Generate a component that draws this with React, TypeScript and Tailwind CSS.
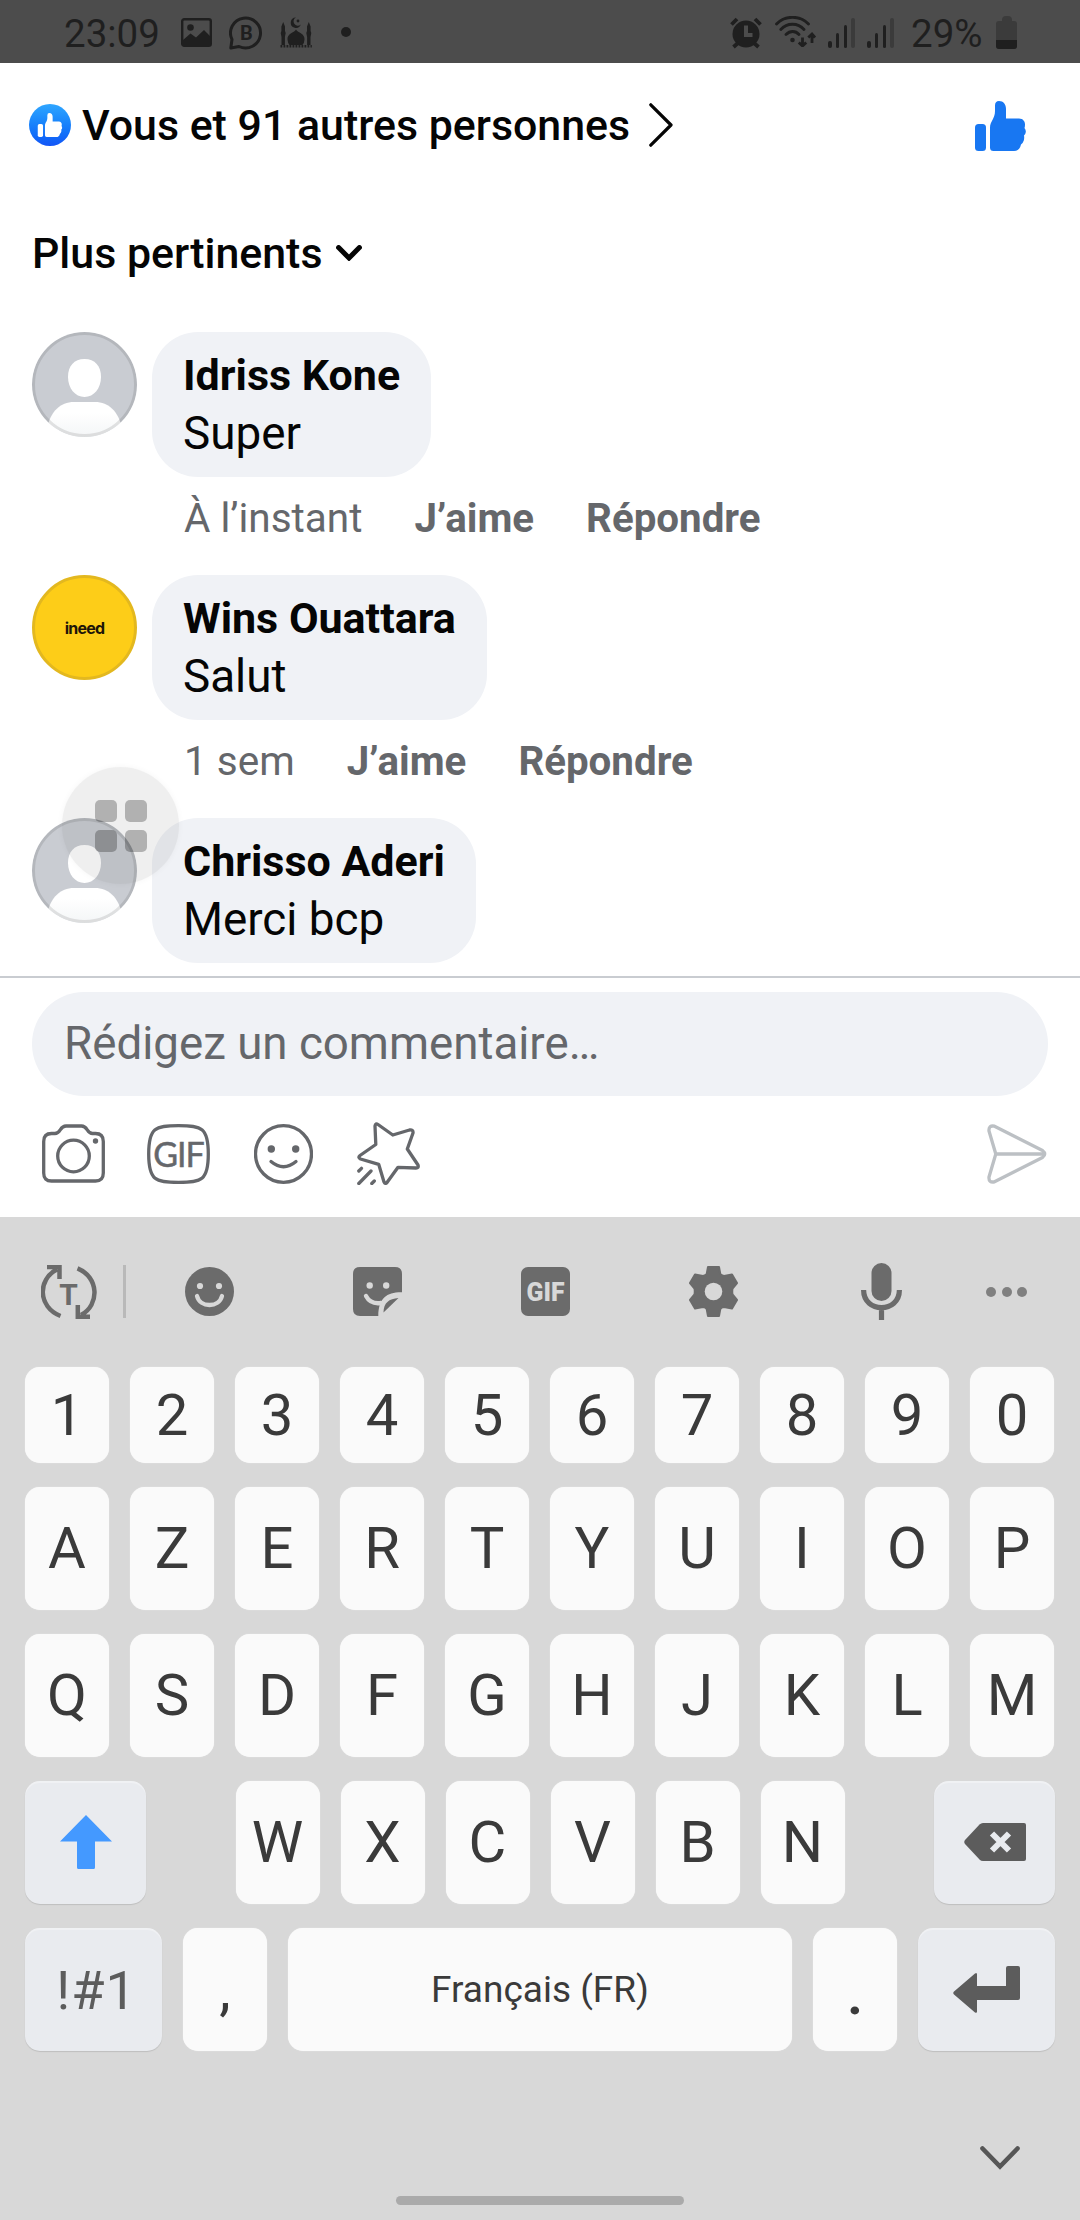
import type { ReactNode } from 'react';

function Thumb({ className }: { className: string }) {
  return (
    <svg viewBox="0 0 51 50" className={className} fill="currentColor">
      <rect x="0" y="23" width="11" height="27" rx="3.5" />
      <path d="M18.500 50 Q15 50 15 46.500 V27 C15 20 20 18 20 10 V4.500 Q20 0 24 0 C28.500 0 31 3.500 31 8 V17.500 H44 C48 17.500 50 20.500 50 23.500 Q50 25.500 49.500 27 Q51 29 50.800 31 Q50.500 33.500 49 34.500 Q49.500 37 48.800 39.500 Q48 42 46 43.500 C45 48 42.500 50 39 50 Z" />
    </svg>
  );
}

function StatusBar() {
  return (
    <div className="flex h-[63px] shrink-0 items-center bg-[#4c4c4c] pl-[64px] pr-[63px] text-[38.5px] leading-[64px] text-[#1f1f1f]">
      <span className="w-[96px] pt-[5px]">23:09</span>
      <svg viewBox="0 0 31 29" className="ml-[21px] mt-[2px] h-[29px] w-[31px]">
        <rect x="1.200" y="1.200" width="28.600" height="26.600" rx="2" fill="none" stroke="currentColor" strokeWidth="2.400" />
        <circle cx="9.500" cy="9.500" r="3.300" fill="currentColor" />
        <path d="M2 22 L9.500 15.500 L15 19.500 L23 12 L29.500 18.500 V28 H2 Z" fill="currentColor" />
      </svg>
      <svg viewBox="0 0 34 34" className="ml-[17px] mt-[3px] h-[34px] w-[34px]">
        <path d="M1.800 32 L3 23.500 A15 15 0 1 1 10 30.500 Z" fill="none" stroke="currentColor" strokeWidth="3" strokeLinejoin="round" />
        <text x="17.300" y="24" textAnchor="middle" fontSize="20" fontWeight="700" fill="currentColor">B</text>
      </svg>
      <svg viewBox="0 0 32 31" className="ml-[17px] mt-[2px] h-[31px] w-[32px]" fill="currentColor">
        <path d="M16 0.500 A5.200 5.200 0 1 0 20.800 7.500 A4.300 4.300 0 1 1 16 0.500 Z" />
        <circle cx="18" cy="4" r="1.400" />
        <path d="M16 12.500 C18 16 25 16.500 24.500 22.500 Q24.300 26 22.500 28 H9.500 Q7.700 26 7.500 22.500 C7 16.500 14 16 16 12.500 Z" />
        <path d="M3.200 5 L5 9.500 V14 L5.700 16 L4.900 20 V28 H1.500 V20 L0.700 16 L1.400 14 V9.500 Z" />
        <path d="M28.800 5 L30.600 9.500 V14 L31.300 16 L30.500 20 V28 H27.100 V20 L26.300 16 L27 14 V9.500 Z" />
        <path d="M0.500 29.300 H31.800" stroke="currentColor" strokeWidth="2.600" strokeDasharray="1.800 1.200" />
      </svg>
      <span className="ml-[29px] h-[10px] w-[10px] rounded-full bg-[#1f1f1f]" />

      <svg viewBox="0 0 33 32" className="ml-auto mt-[2px] h-[32px] w-[33px]">
        <circle cx="16" cy="17" r="13.500" fill="currentColor" />
        <path d="M1.500 7.500 L7 2 M30.500 7.500 L25 2 M3.500 30 L8 26 M28.500 30 L24 26" stroke="currentColor" strokeWidth="3.800" />
        <path d="M16 8.500 V18 H22.500" fill="none" stroke="#4c4c4c" strokeWidth="4" />
      </svg>
      <svg viewBox="0 0 41 31" className="ml-[12px] h-[31px] w-[41px]" fill="none" stroke="currentColor" strokeWidth="2.800" strokeLinecap="round">
        <path d="M1.500 8 C10 -1 25 -1 33.500 8 M5.800 13.500 C12 6.500 23 6.500 29 13.500 M11 18.500 C15 14.500 20.500 14.500 24 18.500" />
        <circle cx="17.500" cy="24" r="2.300" fill="currentColor" stroke="none" />
        <path d="M27.500 21.500 V29.500 M23.800 26.500 L27.500 30 L31.200 26.500 M37 18.500 V27 M33.300 21.500 L37 18 L40 21.500" strokeLinecap="butt" />
      </svg>
      <Signal className="ml-[12px] mt-[2px]" />
      <Signal className="ml-[12px] mt-[2px]" />
      <span className="ml-[17px] w-[72px] pt-[5px]">29%</span>
      <span className="ml-[13px] mt-[2px] flex h-[33px] w-[21px] flex-col items-center">
        <span className="h-[5px] w-[10px] rounded-t-sm bg-[#3b3b3b]" />
        <span className="flex w-full flex-1 flex-col justify-end overflow-hidden rounded-[3px] bg-[#3b3b3b]">
          <span className="h-[9px] bg-[#1f1f1f]" />
        </span>
      </span>
    </div>
  );
}

function Signal({ className }: { className: string }) {
  return (
    <span className={`flex h-[30px] w-[27px] items-end justify-between ${className}`}>
      <span className="h-[7px] w-[3.500px] rounded-full bg-[#1f1f1f]" />
      <span className="h-[15px] w-[3.500px] rounded-full bg-[#1f1f1f]" />
      <span className="h-[23px] w-[3.500px] rounded-full bg-[#1f1f1f]" />
      <span className="h-[30px] w-[3.500px] rounded-full bg-[#3b3b3b]" />
    </span>
  );
}

function DefaultAvatar() {
  return (
    <div className="relative h-[105px] w-[105px] shrink-0 overflow-hidden rounded-full bg-[#c9ccd2]">
      <svg viewBox="0 0 105 105" className="h-full w-full">
        <defs>
          <linearGradient id="torso" x1="0" y1="0" x2="0" y2="1">
            <stop offset="0.300" stopColor="#ffffff" />
            <stop offset="1" stopColor="#f4f6f7" />
          </linearGradient>
        </defs>
        <path d="M52.500 27 C63 27 69 34 69 45 C69 56 62 65 52.500 65 C43 65 36 56 36 45 C36 34 42 27 52.500 27 Z" fill="#fff" />
        <path d="M16 93 C19 80 28 70 42 70 H63 C77 70 86 80 89 93 V105 H16 Z" fill="url(#torso)" />
      </svg>
      <div className="absolute inset-0 rounded-full border-[3px] border-black/10" />
    </div>
  );
}

function IneedAvatar() {
  return (
    <div className="flex h-[105px] w-[105px] shrink-0 items-center justify-center rounded-full border-[3px] border-[#e3b81f] bg-[#fdcd18] font-[Inter,sans-serif] text-[16px] font-bold leading-none tracking-[-0.8px] text-[#1d1508]">
      ineed
    </div>
  );
}

const comments = [
  { name: 'Idriss Kone', text: 'Super', time: 'À l’instant', avatar: <DefaultAvatar /> },
  { name: 'Wins Ouattara', text: 'Salut', time: '1 sem', avatar: <IneedAvatar /> },
  { name: 'Chrisso Aderi', text: 'Merci bcp', time: '', avatar: <DefaultAvatar /> },
];

function Comments() {
  return (
    <div className="relative flex h-[657px] shrink-0 flex-col gap-[33px] overflow-hidden px-8 pt-[13px]">
      {comments.map((c) => (
        <div key={c.name} className="flex items-start gap-[15px]">
          {c.avatar}
          <div>
            <div className="h-[145px] w-fit rounded-[46px] bg-[#f0f2f6] px-[31px] pt-[18px] text-[#050505]">
              <p className="whitespace-nowrap text-[43px] font-bold leading-[50px]">{c.name}</p>
              <p className="mt-[5px] whitespace-nowrap text-[45.8px] leading-[58px]">{c.text}</p>
            </div>
            {c.time && (
              <div className="mt-[17px] flex h-[48px] items-baseline gap-[52px] pl-[32px] text-[40.5px] leading-[48px] text-[#65676b]">
                <span>{c.time}</span>
                <span className="text-[40.3px] font-bold">J’aime</span>
                <span className="text-[40.3px] font-bold">Répondre</span>
              </div>
            )}
          </div>
        </div>
      ))}

      {/* floating assistant button */}
      <div className="absolute left-[62px] top-[448px] grid h-[117px] w-[117px] grid-cols-2 place-content-center justify-center gap-2 rounded-full bg-[#646464]/10 px-[33px] shadow-[0_0_6px_rgba(0,0,0,0.04)]">
        <span className="h-[22px] w-[22px] rounded-[5px] bg-black/26" />
        <span className="h-[22px] w-[22px] rounded-[5px] bg-black/26" />
        <span className="h-[22px] w-[22px] rounded-[5px] bg-black/26" />
        <span className="h-[22px] w-[22px] rounded-[5px] bg-black/26" />
      </div>
    </div>
  );
}

function Composer() {
  return (
    <div className="flex h-[241px] shrink-0 flex-col border-t-2 border-[#c9ccd1] px-8 pt-[14px]">
      <div className="flex h-[104px] shrink-0 items-center rounded-full bg-[#f0f2f6] pl-[32px] text-[45.700px] text-[#65676b]">
        Rédigez un commentaire…
      </div>
      <div className="mt-[26px] flex h-[63px] items-center pl-[10px] text-[#65676b]">
        <svg viewBox="0 0 63 60" className="h-[60px] w-[63px]" fill="none" stroke="currentColor" strokeWidth="3.300">
          <path d="M9.500 9.500 H13 C19 9.500 17.500 2 24 2 H39.500 C46 2 44.500 9.500 50.500 9.500 H53.500 Q61.300 9.500 61.300 17.500 V49 Q61.300 57 53.500 57 H9.500 Q1.700 57 1.700 49 V17.500 Q1.700 9.500 9.500 9.500 Z" />
          <circle cx="31.500" cy="32" r="15.800" />
          <circle cx="53.500" cy="17" r="2.700" fill="currentColor" stroke="none" />
        </svg>
        <svg viewBox="0 0 63 60" className="ml-[42px] h-[60px] w-[63px] overflow-visible">
          <path d="M31.500 1.700 C55 1.700 61.300 4 61.300 30 C61.300 56 55 58.300 31.500 58.300 C8 58.300 1.700 56 1.700 30 C1.700 4 8 1.700 31.500 1.700 Z" fill="none" stroke="currentColor" strokeWidth="3.300" />
          <text x="31.500" y="43" textAnchor="middle" className="font-[Lato,sans-serif]" fontSize="34" letterSpacing="-1" fill="currentColor" stroke="currentColor" strokeWidth="0.500">GIF</text>
        </svg>
        <svg viewBox="0 0 59 60" className="ml-[44px] h-[60px] w-[59px]" fill="none" stroke="currentColor" strokeWidth="3.300" strokeLinecap="round">
          <ellipse cx="29.500" cy="30" rx="28" ry="28.300" />
          <circle cx="17.300" cy="25" r="3.700" fill="currentColor" stroke="none" />
          <circle cx="41.700" cy="25" r="3.700" fill="currentColor" stroke="none" />
          <path d="M17 37.500 Q29.500 48 42 37.500" />
        </svg>
        <svg viewBox="0 0 63 63" className="ml-[44px] h-[63px] w-[63px]" fill="none" stroke="currentColor" strokeWidth="3.300" strokeLinecap="round" strokeLinejoin="round">
          <path d="M21 2.500 L35.800 13 L52.500 8 Q56.500 7.500 56 11 L50.300 27 L61 43 Q62 46 59 46 L41 45.300 L30 60.500 Q28 62.500 27 60 L21.700 42.300 L3.500 37 Q0.500 35.500 3 33.500 L18.800 22.500 L18 4 Q18.500 0.800 21 2.500 Z" />
          <path d="M1.800 49 L4.500 46.300 M1.800 61.500 L14 49 M14.800 61.500 L17.300 59" />
        </svg>
        <svg viewBox="0 0 60 60" className="ml-auto mr-[1px] h-[60px] w-[60px]" fill="none" stroke="#bcc0c4" strokeWidth="3.300" strokeLinejoin="round">
          <path d="M8.800 30 L2 7 Q1.500 1 7.500 2.200 L55.500 26.500 Q60 30 55.500 33.500 L7.500 57.800 Q1.500 59 2 53 Z M8.800 30 H57" />
        </svg>
      </div>
    </div>
  );
}

function KeyboardToolbar() {
  return (
    <div className="flex h-[150px] items-center pb-[1px] pl-[41px] text-[#6b6b6b]">
      <svg viewBox="0 0 56 54" className="h-[54px] w-[56px]" fill="none" stroke="currentColor" strokeWidth="4.500">
        <path d="M19.500 51 C-3.500 42 -3.500 14 16 4.500 M6 2 H18.500 V14 M36.500 3.300 C58 12 59 40 40 50 M36.800 40 V51.800 H49" />
        <text x="27.500" y="39.500" textAnchor="middle" fontSize="30" fontWeight="700" fill="currentColor" stroke="none">T</text>
      </svg>
      <span className="ml-[26px] h-[53px] w-[3px] bg-[#b9b9b9]" />
      <svg viewBox="0 0 49 49" className="ml-[59px] h-[49px] w-[49px]">
        <circle cx="24.500" cy="24.500" r="24.500" fill="currentColor" />
        <circle cx="15" cy="19" r="3.100" fill="#d8d8d8" />
        <circle cx="34" cy="19" r="3.100" fill="#d8d8d8" />
        <path d="M12 29 C15 41 34 41 37 29" fill="none" stroke="#d8d8d8" strokeWidth="4.300" strokeLinecap="round" />
      </svg>
      <svg viewBox="0 0 49 49" className="ml-[119px] h-[49px] w-[49px]">
        <path d="M7 0 H42 Q49 0 49 7 V25.300 C34 25 25.500 31 25.300 49 H7 Q0 49 0 42 V7 Q0 0 7 0 Z" fill="currentColor" />
        <path d="M45.500 31 C36 31.500 30.500 36 30.500 45.500 Z" fill="currentColor" />
        <circle cx="16.700" cy="18.500" r="3.200" fill="#d8d8d8" />
        <circle cx="33.200" cy="18.500" r="3.200" fill="#d8d8d8" />
        <path d="M13 29 Q17.500 37.500 28 36" fill="none" stroke="#d8d8d8" strokeWidth="4.300" strokeLinecap="round" />
      </svg>
      <svg viewBox="0 0 49 49" className="ml-[119px] h-[49px] w-[49px]">
        <rect width="49" height="49" rx="7" fill="currentColor" />
        <text x="5.500" y="33.500" fontSize="25.500" fontWeight="900" textLength="38" lengthAdjust="spacingAndGlyphs" fill="#d8d8d8">GIF</text>
      </svg>
      <svg viewBox="0 0 49 51" className="ml-[119px] h-[51px] w-[49px]">
        <path d="M19 1 H30 L31.300 8 Q32 9.500 35 10 L43 8.500 L48 17 L43.500 22.500 Q43 25.500 43.500 28.500 L48 34 L43 42.500 L35 41 Q32 41.500 31.300 43 L30 50 H19 L17.700 43 Q17 41.500 14 41 L6 42.500 L1 34 L5.500 28.500 Q6 25.500 5.500 22.500 L1 17 L6 8.500 L14 10 Q17 9.500 17.700 8 Z" fill="currentColor" stroke="currentColor" strokeWidth="2" strokeLinejoin="round" />
        <circle cx="24.500" cy="25.500" r="8.800" fill="#d8d8d8" />
      </svg>
      <svg viewBox="0 0 41 57" className="ml-[123px] h-[57px] w-[41px]" fill="none" stroke="currentColor" strokeWidth="5.200">
        <rect x="10.500" y="0" width="20" height="38" rx="10" fill="currentColor" stroke="none" />
        <path d="M2.600 27 C2.600 50.500 38.400 50.500 38.400 27 M20.500 44 V57" />
      </svg>
      <div className="ml-[84px] flex gap-[5.500px]">
        <span className="h-[10px] w-[10px] rounded-full bg-[#808080]" />
        <span className="h-[10px] w-[10px] rounded-full bg-[#808080]" />
        <span className="h-[10px] w-[10px] rounded-full bg-[#808080]" />
      </div>
    </div>
  );
}

function Key({ children, className = 'h-[123px] w-[84px] pb-[2px]' }: { children: ReactNode; className?: string }) {
  return (
    <div className={`flex shrink-0 items-center justify-center rounded-[15px] bg-[#fafafa] text-[58px] leading-none text-[#3a3a3a] shadow-[0_0_1px_rgba(255,255,255,0.8)] ${className}`}>
      {children}
    </div>
  );
}

function ActionKey({ children, className }: { children: ReactNode; className: string }) {
  return (
    <div className={`flex h-[123px] shrink-0 items-center justify-center rounded-[15px] bg-[#e9ebef] pb-[1px] text-[#5c5c5c] shadow-[0_1px_1px_rgba(0,0,0,0.12),inset_0_2px_1px_rgba(255,255,255,0.35)] ${className}`}>
      {children}
    </div>
  );
}

function Keyboard() {
  return (
    <div className="flex flex-1 flex-col bg-[#d8d8d8]">
      <KeyboardToolbar />
      <div className="flex flex-col gap-6 px-[25px]">
        <div className="flex gap-[21px]">
          {'1234567890'.split('').map((k) => (
            <Key key={k} className="h-[96px] w-[84px]">{k}</Key>
          ))}
        </div>
        {['AZERTYUIOP', 'QSDFGHJKLM'].map((row) => (
          <div key={row} className="flex gap-[21px]">
            {row.split('').map((k) => (
              <Key key={k}>{k}</Key>
            ))}
          </div>
        ))}
        <div className="flex justify-between">
          <ActionKey className="w-[121px]">
            <svg viewBox="0 0 52 54" className="h-[54px] w-[52px]">
              <path d="M26 0 L52 26.500 H35 V52.500 Q35 54 33.500 54 H18.500 Q17 54 17 52.500 V26.500 H0 Z" fill="#4499ff" />
            </svg>
          </ActionKey>
          <div className="flex gap-[21px]">
            {'WXCVBN'.split('').map((k) => (
              <Key key={k}>{k}</Key>
            ))}
          </div>
          <ActionKey className="w-[121px]">
            <svg viewBox="0 0 62 38" className="h-[38px] w-[62px]">
              <path d="M19 0 H60 Q62 0 62 2 V36 Q62 38 60 38 H19 Q17 38 15.500 36.500 L1 21 Q-0.500 19 1 17 L15.500 1.500 Q17 0 19 0 Z" fill="currentColor" />
              <path d="M28 10.500 L45 27.500 M45 10.500 L28 27.500" stroke="#e9ebef" strokeWidth="6" />
            </svg>
          </ActionKey>
        </div>
        <div className="flex gap-[21px]">
          <ActionKey className="w-[137px] text-[54px] leading-none">
            <span className="pl-[6px] pt-[3px] tracking-[1px]">!#1</span>
          </ActionKey>
          <Key>,</Key>
          <Key className="h-[123px] w-[504px]">
            <span className="text-[37px]">Français (FR)</span>
          </Key>
          <Key>
            <span className="pt-[9px] text-[62px] font-medium">.</span>
          </Key>
          <ActionKey className="w-[137px]">
            <svg viewBox="0 0 67 47" className="h-[47px] w-[67px]">
              <path d="M53 2 Q53 0 55 0 H65 Q67 0 67 2 V32 Q67 34 65 34 H24 V45.500 Q24 47.500 22 46.500 L1 28.500 Q-0.500 27 1 25.500 L22 7.500 Q24 6 24 8.500 V20 H53 Z" fill="currentColor" />
            </svg>
          </ActionKey>
        </div>
      </div>
      <svg viewBox="0 0 40 24" className="ml-auto mr-[60px] mt-[95px] h-[24px] w-[40px]" fill="none" stroke="#565656" strokeWidth="4.600" strokeLinecap="round">
        <path d="M2.500 2.500 L20 20.500 L37.500 2.500" strokeLinejoin="miter" />
      </svg>
      <div className="mx-auto mt-[26px] h-[9px] w-[288px] rounded-full bg-[#aaaaaa]" />
    </div>
  );
}

export default function App() {
  return (
    <div className="flex h-[2220px] w-[1080px] flex-col overflow-hidden bg-white font-['Roboto',sans-serif]">
      <StatusBar />
      <div className="flex h-[124px] shrink-0 items-center pl-[29px] pr-[54px] text-[#050505]">
        <span className="flex h-[42px] w-[42px] items-center justify-center rounded-full bg-linear-to-b from-[#2fa6ff] to-[#1455f6]">
          <Thumb className="mb-[1px] h-[24px] w-[26px] text-white" />
        </span>
        <span className="ml-[11px] w-[548px] whitespace-nowrap text-[42.900px] font-medium">Vous et 91 autres personnes</span>
        <svg viewBox="0 0 24 44" className="ml-[19px] h-[44px] w-[24px]" fill="none" stroke="currentColor" strokeWidth="3.200" strokeLinecap="round" strokeLinejoin="round">
          <path d="M1.800 1.800 L22 22 L1.800 42.200" />
        </svg>
        <Thumb className="ml-auto mt-[2px] h-[50px] w-[51px] text-[#1877f2]" />
      </div>
      <div className="flex h-[132px] shrink-0 items-center gap-[14px] pl-[32px] text-[42.900px] font-medium text-[#050505]">
        <span>Plus pertinents</span>
        <svg viewBox="0 0 26 16" className="h-[16px] w-[26px]" fill="none" stroke="currentColor" strokeWidth="5" strokeLinecap="round">
          <path d="M2.600 2.600 L13 13 L23.400 2.600" />
        </svg>
      </div>
      <Comments />
      <Composer />
      <Keyboard />
    </div>
  );
}
